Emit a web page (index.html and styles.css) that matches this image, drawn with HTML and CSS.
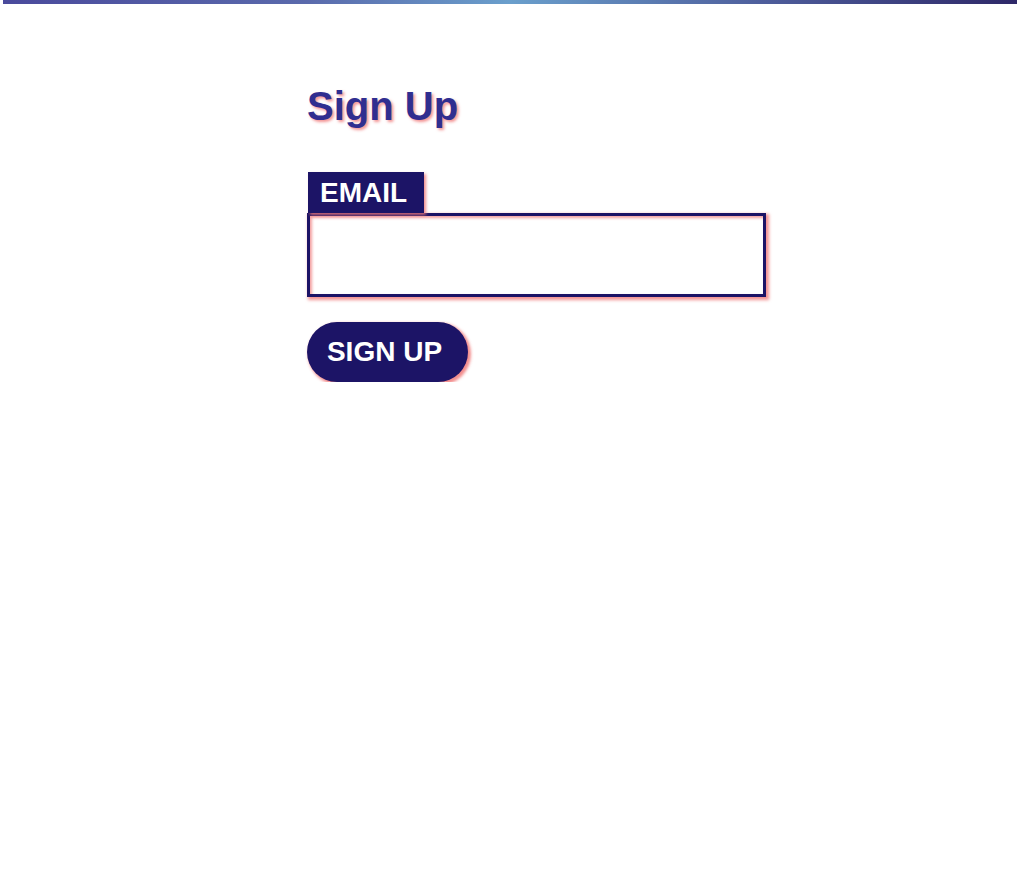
FILE: index.html
```html
<!DOCTYPE html>
<html lang="en">
<head>
<meta charset="utf-8">
<title>Sign Up</title>
<link rel="stylesheet" href="styles.css">
</head>
<body>
<div class="top-bar"></div>
<main class="page">
  <form class="signup">
    <h1 class="title">Sign Up</h1>
    <div class="field">
      <label class="label" for="email">EMAIL</label>
      <input class="input" id="email" type="email">
    </div>
    <button class="button" type="button">SIGN UP</button>
  </form>
</main>
</body>
</html>
```

FILE: styles.css
```css
* { box-sizing: border-box; }

html, body {
  margin: 0;
  padding: 0;
  background: #ffffff;
  font-family: "Liberation Sans", Arial, Helvetica, sans-serif;
}

.top-bar {
  height: 4px;
  margin: 0 3px;
  background: linear-gradient(to right, #4a4a9c 0%, #5a6aac 30%, #6a9fcc 50%, #4e5e9c 75%, #2e2868 100%);
}

.page {
  padding: 0 0 0 307px;
}

.signup {
  display: flex;
  flex-direction: column;
  align-items: flex-start;
}

.title {
  margin: 78px 0 0 0;
  font-size: 40px;
  line-height: 48px;
  font-weight: 700;
  color: #302e90;
  text-shadow: 2px 2px 3px rgba(240, 120, 120, 0.8);
}

.field {
  margin-top: 42px;
  display: flex;
  flex-direction: column;
  align-items: flex-start;
}

.label {
  margin-left: 1px;
  height: 41px;
  width: 116px;
  padding: 0 0 0 12px;
  display: flex;
  align-items: center;
  background: #1c1466;
  color: #ffffff;
  font-size: 28px;
  font-weight: 700;
  box-shadow: 2px 2px 3px rgba(240, 120, 120, 0.85);
  position: relative;
  z-index: 1;
}

.input {
  width: 459px;
  height: 84px;
  margin: 0;
  border: 3px solid #1c1466;
  background: #ffffff;
  box-shadow: 2px 2px 3px 1px rgba(240, 120, 120, 0.8), inset 2px 2px 3px rgba(240, 120, 120, 0.7);
  font-size: 24px;
  outline: none;
}

.button {
  margin-top: 25px;
  height: 60px;
  width: 161px;
  padding: 0 6px 0 0;
  border: none;
  border-radius: 30px;
  background: #1c1466;
  color: #ffffff;
  font-family: "Liberation Sans", Arial, Helvetica, sans-serif;
  font-size: 28px;
  font-weight: 700;
  box-shadow: 2px 2px 3px 1px rgba(240, 120, 120, 0.85);
  cursor: pointer;
}
```
